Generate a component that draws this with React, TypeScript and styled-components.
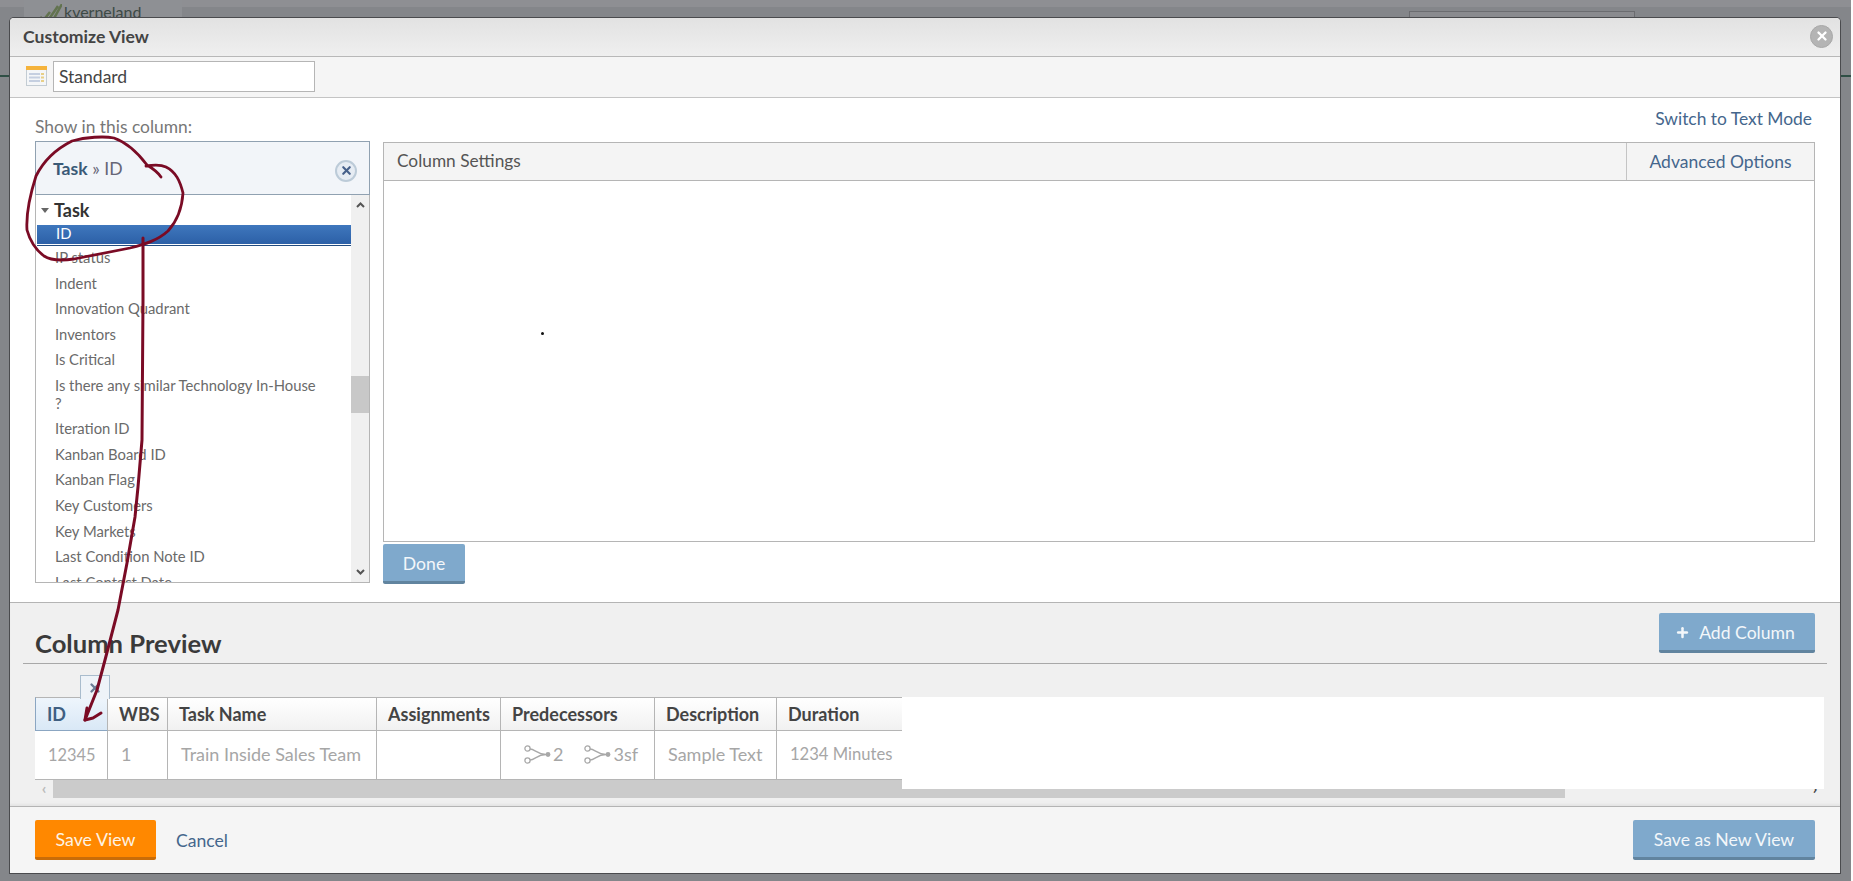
import styled, { createGlobalStyle } from 'styled-components'
import { Plus, X } from 'lucide-react'

const GlobalStyle = createGlobalStyle`
  html, body {
    margin: 0;
    height: 100%;
    background: #85878b;
    overflow: hidden;
    font-family: Lato, "Noto Sans", Arial, sans-serif;
  }
  * {
    box-sizing: border-box;
  }
`

const fields = [
  'IP status',
  'Indent',
  'Innovation Quadrant',
  'Inventors',
  'Is Critical',
  'Is there any similar Technology In-House ?',
  'Iteration ID',
  'Kanban Board ID',
  'Kanban Flag',
  'Key Customers',
  'Key Markets',
  'Last Condition Note ID',
  'Last Contact Date',
]

const columns = [
  { title: 'ID', width: 73, active: true, value: '12345', size: 16.4 },
  { title: 'WBS', width: 60, value: '1' },
  { title: 'Task Name', width: 209, value: 'Train Inside Sales Team' },
  { title: 'Assignments', width: 124, value: '' },
  { title: 'Predecessors', width: 154, value: 'links' },
  { title: 'Description', width: 122, value: 'Sample Text' },
  { title: 'Duration', width: 125, value: '1234 Minutes', last: true, size: 16.6 },
]

function TableIcon() {
  return (
    <svg width="21" height="20" viewBox="0 0 21 20">
      <rect x="0.5" y="0.5" width="20" height="19" fill="#f4f6f8" stroke="#c3ccd3" />
      <rect x="0" y="0" width="21" height="4" fill="#f5b33c" />
      <g fill="#c5cfe0">
        <rect x="3" y="7" width="11" height="2" />
        <rect x="3" y="10.5" width="11" height="2" />
        <rect x="3" y="14" width="11" height="2" />
      </g>
      <g fill="#e8cf87">
        <rect x="15" y="7" width="3" height="2" />
        <rect x="15" y="10.5" width="3" height="2" />
        <rect x="15" y="14" width="3" height="2" />
      </g>
    </svg>
  )
}

function LinkIcon() {
  return (
    <svg width="27" height="19" viewBox="0 0 27 19" fill="none" stroke="#a8a8a8" strokeWidth="1.3">
      <circle cx="3.5" cy="3.5" r="2.6" />
      <circle cx="3.5" cy="15.5" r="2.6" />
      <path d="M6 4 C11 4 13 9.5 22 9.5 M6 15 C11 15 13 9.5 22 9.5" />
      <circle cx="24" cy="9.5" r="2.4" fill="#a8a8a8" stroke="none" />
    </svg>
  )
}

function Chevron({ down }: { down?: boolean }) {
  return (
    <svg width="9" height="6" viewBox="0 0 9 6" fill="none" stroke="#555" strokeWidth="2">
      <path d={down ? 'M1 1 L4.5 4.5 L8 1' : 'M1 5 L4.5 1.5 L8 5'} />
    </svg>
  )
}

function Annotation() {
  return (
    <Scribble width="1853" height="881" viewBox="0 0 1853 881" fill="none" stroke="#7a0b25" strokeWidth="2.8" strokeLinecap="round" strokeLinejoin="round">
      <path d="M146 166 C152 165 160 164 166 167 C176 172 180 181 183 193 C182 208 178 220 168 231 C158 240 146 244 130 248 C110 252 90 256 74 259 C60 261 50 260 44 256 C36 250 30 241 27 230 C26 215 29 198 36 176 C44 160 58 148 72 141 C86 137 104 136 114 138 C128 143 138 153 147 165 C152 168 157 171 161 177" />
      <path d="M143 238 L143 300 L142 440 L138 487 L135 517 L127 563 L118 610 L105 660 L97 690 L85 720" strokeWidth="3" />
      <path d="M87 708 L85 720 L93 718 L101 713" strokeWidth="3" />
    </Scribble>
  )
}

export default function App() {
  return (
    <>
      <GlobalStyle />
      <Backdrop>
        <TopStrip />
        <LogoTab>
          <LogoMark width="28" height="18" viewBox="0 0 28 18">
            <path d="M2 18 L8 13 M8 18 L16 8 M13 18 L24 2 M18 18 L28 0" stroke="#62734f" strokeWidth="2.5" />
          </LogoMark>
          <LogoText>kverneland</LogoText>
        </LogoTab>
        <GhostInput />
        <GreenLine />
        <GreenLine $right />
        <EdgeLine />

        <Modal>
          <ModalHeader>
            <ModalTitle>Customize View</ModalTitle>
            <CloseButton>
              <X size={14} strokeWidth={4} color="#fff" />
            </CloseButton>
          </ModalHeader>

          <Toolbar>
            <TableIcon />
            <NameInput defaultValue="Standard" />
          </Toolbar>

          <Editor>
            <LeftColumn>
              <FieldLabel>Show in this column:</FieldLabel>
              <SelectedField>
                <span>
                  <Crumb>Task</Crumb> » ID
                </span>
                <ClearButton>
                  <X size={13} strokeWidth={4} color="#46608a" />
                </ClearButton>
              </SelectedField>
              <FieldList>
                <FieldScroll>
                  <GroupRow>
                    <Caret />
                    Task
                  </GroupRow>
                  <SelectedRow>ID</SelectedRow>
                  {fields.map((f) => (
                    <FieldRow key={f}>{f}</FieldRow>
                  ))}
                </FieldScroll>
                <Scrollbar>
                  <ScrollArrow>
                    <Chevron />
                  </ScrollArrow>
                  <ScrollThumb />
                  <ScrollArrow $bottom>
                    <Chevron down />
                  </ScrollArrow>
                </Scrollbar>
              </FieldList>
            </LeftColumn>

            <RightColumn>
              <SwitchLink>Switch to Text Mode</SwitchLink>
              <SettingsPanel>
                <SettingsHeader>
                  <SettingsTitle>Column Settings</SettingsTitle>
                  <AdvancedTab>Advanced Options</AdvancedTab>
                </SettingsHeader>
                <SettingsBody>
                  <Dot />
                </SettingsBody>
              </SettingsPanel>
              <BlueButton $width={82}>Done</BlueButton>
            </RightColumn>
          </Editor>

          <Preview>
            <PreviewHead>
              <PreviewTitle>Column Preview</PreviewTitle>
              <BlueButton $width={156}>
                <Plus size={15} strokeWidth={4} />
                <AddLabel>Add Column</AddLabel>
              </BlueButton>
            </PreviewHead>
            <RemoveTab>
              <X size={14} strokeWidth={4} color="#6a7d95" />
            </RemoveTab>
            <PreviewGrid>
              <ColumnsRow>
                {columns.map((c) => (
                  <Column key={c.title} style={{ width: c.width }}>
                    <ColumnHead $active={c.active} $last={c.last}>
                      {c.title}
                    </ColumnHead>
                    <ColumnCell $last={c.last} $size={c.size}>
                      {c.value === 'links' ? (
                        <Links>
                          <LinkItem>
                            <LinkIcon />2
                          </LinkItem>
                          <LinkItem>
                            <LinkIcon />3sf
                          </LinkItem>
                        </Links>
                      ) : (
                        c.value
                      )}
                    </ColumnCell>
                  </Column>
                ))}
              </ColumnsRow>
              <Blank />
            </PreviewGrid>
            <HScroll>
              <HArrow>‹</HArrow>
              <HThumb />
              <HArrow $right>›</HArrow>
            </HScroll>
          </Preview>

          <Footer>
            <FooterLeft>
              <SaveButton>Save View</SaveButton>
              <CancelLink>Cancel</CancelLink>
            </FooterLeft>
            <BlueButton $width={182}>Save as New View</BlueButton>
          </Footer>
        </Modal>

        <Annotation />
      </Backdrop>
    </>
  )
}

const Backdrop = styled.div`
  position: relative;
  width: 1853px;
  height: 881px;
  padding: 18px 13px 8px 10px;
  background: #84868a;
  overflow: hidden;
`

const TopStrip = styled.div`
  position: absolute;
  top: 0;
  left: 0;
  right: 0;
  height: 7px;
  background: #8e8f93;
`

const LogoTab = styled.div`
  position: absolute;
  top: 0;
  left: 24px;
  width: 158px;
  height: 18px;
  padding: 4px 0 0 10px;
  display: flex;
  align-items: flex-start;
  gap: 2px;
  background: #8e9094;
  overflow: hidden;
`

const LogoMark = styled.svg`
  flex: none;
`

const LogoText = styled.span`
  font-size: 16px;
  line-height: 15px;
  color: #3d4a46;
`

const GhostInput = styled.div`
  position: absolute;
  top: 11px;
  left: 1409px;
  width: 226px;
  height: 8px;
  border: 1px solid #6b6c70;
  background: #8a8b8f;
`

const GreenLine = styled.div<{ $right?: boolean }>`
  position: absolute;
  top: 75px;
  height: 2px;
  width: 11px;
  left: ${(p) => (p.$right ? '1840px' : '0')};
  background: #2f4f45;
`

const EdgeLine = styled.div`
  position: absolute;
  top: 0;
  right: 0;
  bottom: 0;
  width: 2px;
  background: #fdfdfd;
`

const Modal = styled.div`
  position: relative;
  width: 1830px;
  height: 855px;
  display: flex;
  flex-direction: column;
  background: #fff;
  border-radius: 4px 4px 0 0;
  box-shadow: 0 0 0 1px #4a4b4e;
`

const ModalHeader = styled.div`
  height: 39px;
  flex: none;
  padding: 0 7px 2px 13px;
  display: flex;
  align-items: center;
  justify-content: space-between;
  background: linear-gradient(180deg, #e2e2e2 0%, #efefef 100%);
  border-bottom: 1px solid #b8b8b8;
  border-radius: 4px 4px 0 0;
`

const ModalTitle = styled.h1`
  margin: 0;
  font-size: 17.6px;
  font-weight: 700;
  color: #444;
`

const CloseButton = styled.div`
  width: 23px;
  height: 23px;
  border-radius: 50%;
  display: flex;
  align-items: center;
  justify-content: center;
  background: #b4b4b4;
  border: 1px solid #a8a8a8;
`

const Toolbar = styled.div`
  height: 41px;
  flex: none;
  padding: 0 0 2px 16px;
  display: flex;
  align-items: center;
  gap: 6px;
  background: #f5f5f5;
  border-bottom: 1px solid #c4c4c4;
`

const NameInput = styled.input`
  width: 262px;
  height: 31px;
  padding: 0 5px;
  border: 1px solid #b5b5b5;
  background: #fff;
  font-family: inherit;
  font-size: 17.5px;
  color: #444;
  outline: none;
`

const Editor = styled.div`
  flex: none;
  height: 505px;
  padding: 0 25px 0 25px;
  display: flex;
  gap: 13px;
  background: #fff;
  border-bottom: 1px solid #b4b4b4;
`

const LeftColumn = styled.div`
  width: 335px;
  flex: none;
  display: flex;
  flex-direction: column;
`

const FieldLabel = styled.div`
  height: 43px;
  padding-top: 19px;
  font-size: 17.4px;
  line-height: 20px;
  color: #777;
`

const SelectedField = styled.div`
  height: 54px;
  flex: none;
  padding: 0 12px 0 17px;
  display: flex;
  align-items: center;
  justify-content: space-between;
  border: 1px solid #90a1b1;
  background: #f2f5f9;
  font-size: 17.6px;
  color: #667;
`

const Crumb = styled.b`
  color: #3a5a77;
`

const ClearButton = styled.div`
  width: 22px;
  height: 22px;
  margin-top: 5px;
  border-radius: 50%;
  display: flex;
  align-items: center;
  justify-content: center;
  border: 2px solid #bccbd8;
  background: #e6ecf3;
`

const FieldList = styled.div`
  height: 388px;
  flex: none;
  display: flex;
  justify-content: space-between;
  padding-left: 1px;
  border: 1px solid #b5b5b5;
  border-top: 0;
  background: #fff;
`

const FieldScroll = styled.div`
  width: 315px;
  overflow: hidden;
`

const GroupRow = styled.div`
  height: 30px;
  padding: 0 0 0 4px;
  display: flex;
  align-items: center;
  gap: 5px;
  font-size: 18px;
  font-weight: 700;
  color: #333;
`

const Caret = styled.span`
  width: 0;
  height: 0;
  border-left: 4.5px solid transparent;
  border-right: 4.5px solid transparent;
  border-top: 5px solid #666;
`

const SelectedRow = styled.div`
  height: 21px;
  margin-bottom: -1px;
  padding-left: 19px;
  font-size: 14.8px;
  line-height: 16px;
  color: #fff;
  background: linear-gradient(180deg, #3f77bd 0%, #2b5fa6 100%);
  border-bottom: 1px solid #234c80;
  box-shadow: inset 0 -1px 0 #fff;
`

const FieldRow = styled.div`
  padding: 4px 25px 4px 18px;
  font-size: 14.8px;
  line-height: 17.6px;
  color: #6a6a6a;
`

const Scrollbar = styled.div`
  width: 18px;
  flex: none;
  display: flex;
  flex-direction: column;
  background: #f0f0f0;
`

const ScrollArrow = styled.div<{ $bottom?: boolean }>`
  height: 20px;
  display: flex;
  align-items: center;
  justify-content: center;
  margin-top: ${(p) => (p.$bottom ? 'auto' : '0')};
`

const ScrollThumb = styled.div`
  height: 37px;
  margin-top: 161px;
  background: #c8c8c8;
`

const RightColumn = styled.div`
  flex: 1;
  display: flex;
  flex-direction: column;
`

const SwitchLink = styled.a`
  height: 44px;
  padding: 11px 3px 0 0;
  text-align: right;
  font-size: 17.4px;
  line-height: 20px;
  color: #44668c;
`

const SettingsPanel = styled.div`
  height: 400px;
  flex: none;
  display: flex;
  flex-direction: column;
  border: 1px solid #b5b5b5;
  margin-bottom: 2px;
`

const SettingsHeader = styled.div`
  height: 38px;
  flex: none;
  display: flex;
  justify-content: space-between;
  background: #f4f4f4;
  border-bottom: 1px solid #b5b5b5;
`

const SettingsTitle = styled.div`
  padding-left: 13px;
  font-size: 17.3px;
  line-height: 36px;
  color: #555;
`

const AdvancedTab = styled.div`
  width: 188px;
  text-align: center;
  font-size: 17.5px;
  line-height: 37px;
  color: #44668c;
  border-left: 1px solid #c4c4c4;
`

const SettingsBody = styled.div`
  flex: 1;
  position: relative;
`

const Dot = styled.span`
  position: absolute;
  left: 157px;
  top: 151px;
  width: 3px;
  height: 3px;
  border-radius: 50%;
  background: #111;
`

const BlueButton = styled.div<{ $width: number }>`
  width: ${(p) => p.$width}px;
  height: 40px;
  flex: none;
  display: flex;
  align-items: center;
  justify-content: center;
  gap: 9px;
  padding-top: 2px;
  background: #7fa9cc;
  border-bottom: 3px solid #61849f;
  border-radius: 2px;
  font-size: 17.6px;
  color: #f3f7fa;
`

const AddLabel = styled.span`
  margin-right: 4px;
`

const Preview = styled.div`
  flex: 1;
  position: relative;
  padding: 10px 13px 0 13px;
  background: #f0f0f0;
  border-bottom: 1px solid #b4b4b4;
  box-shadow: inset 0 -4px 3px -2px #e4e4e4;
`

const PreviewHead = styled.div`
  height: 51px;
  padding: 0 12px 0 12px;
  display: flex;
  align-items: flex-start;
  justify-content: space-between;
  border-bottom: 1px solid #a8a8a8;
`

const PreviewTitle = styled.h2`
  margin: 16px 0 0;
  font-size: 25.6px;
  line-height: 28px;
  font-weight: 700;
  color: #3a3a3a;
`

const RemoveTab = styled.div`
  position: absolute;
  left: 70px;
  top: 72px;
  width: 30px;
  height: 24px;
  display: flex;
  align-items: center;
  justify-content: center;
  background: #eef3f8;
  border: 1px solid #a9bccd;
  border-bottom: 0;
`

const PreviewGrid = styled.div`
  display: flex;
  margin: 33px 0 0 12px;
  height: 83px;
`

const ColumnsRow = styled.div`
  display: flex;
  background: #fff;
`

const Column = styled.div`
  flex: none;
  display: flex;
  flex-direction: column;
`

const ColumnHead = styled.div<{ $active?: boolean; $last?: boolean }>`
  height: 34px;
  padding-left: 11px;
  font-size: 18px;
  font-weight: 700;
  line-height: 32px;
  color: ${(p) => (p.$active ? '#3f5f82' : '#444')};
  background: ${(p) =>
    p.$active
      ? 'linear-gradient(180deg, #eef5fc 0%, #d9e8f6 100%)'
      : 'linear-gradient(180deg, #fff 0%, #f1f1f1 100%)'};
  border-top: 1px solid #b5b5b5;
  border-bottom: 1px solid ${(p) => (p.$active ? '#8ba6c2' : '#b5b5b5')};
  border-right: ${(p) => (p.$last ? '0' : '1px solid #b5b5b5')};
  border-left: ${(p) => (p.$active ? '1px solid #8ba6c2' : '0')};
`

const ColumnCell = styled.div<{ $last?: boolean; $size?: number }>`
  height: 49px;
  padding: 0 0 2px 13px;
  display: flex;
  align-items: center;
  font-size: ${(p) => p.$size ?? 18}px;
  color: #a6a6a6;
  background: #fff;
  border-bottom: 1px solid #b5b5b5;
  border-right: ${(p) => (p.$last ? '0' : '1px solid #b5b5b5')};
`

const Links = styled.div`
  display: flex;
  padding-left: 10px;
  gap: 21px;
`

const LinkItem = styled.span`
  display: flex;
  align-items: center;
  gap: 2px;
`

const Blank = styled.div`
  flex: none;
  width: 922px;
  height: 92px;
  position: relative;
  z-index: 1;
  background: #fff;
`

const HScroll = styled.div`
  display: flex;
  height: 18px;
  margin-left: 12px;
  margin-right: 3px;
  background: #f0f0f0;
`

const HArrow = styled.div<{ $right?: boolean }>`
  width: 18px;
  text-align: center;
  font-size: 16px;
  line-height: 15px;
  font-weight: 700;
  color: ${(p) => (p.$right ? '#444' : '#bbb')};
  margin-left: ${(p) => (p.$right ? 'auto' : '0')};
`

const HThumb = styled.div`
  width: 1512px;
  background: #cbcbcb;
`

const Footer = styled.div`
  flex: none;
  height: 66px;
  padding: 13px 25px 0 25px;
  display: flex;
  align-items: flex-start;
  justify-content: space-between;
  background: #f5f5f5;
`

const FooterLeft = styled.div`
  display: flex;
  align-items: center;
  gap: 20px;
`

const SaveButton = styled.div`
  width: 121px;
  height: 40px;
  display: flex;
  align-items: center;
  justify-content: center;
  background: #ff8800;
  border-bottom: 3px solid #c96c08;
  border-radius: 2px;
  font-size: 17.8px;
  color: #fdf3e4;
`

const CancelLink = styled.a`
  font-size: 17.6px;
  color: #44668c;
`

const Scribble = styled.svg`
  position: absolute;
  top: 0;
  left: 0;
  pointer-events: none;
  z-index: 5;
`
